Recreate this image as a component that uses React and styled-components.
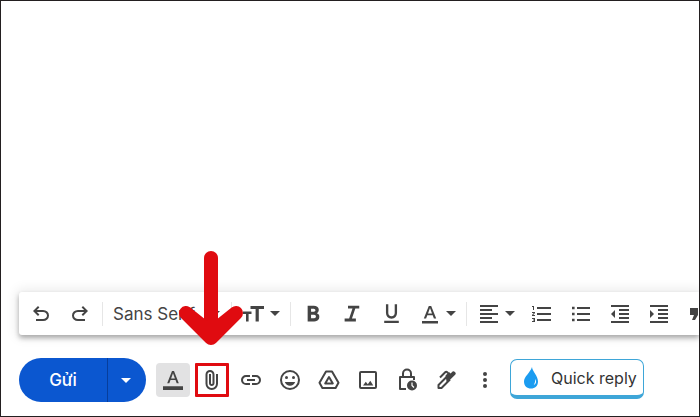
import styled, { createGlobalStyle, css } from 'styled-components'

const GlobalStyle = createGlobalStyle`
  * {
    box-sizing: border-box;
  }

  body {
    margin: 0;
    background: #fff;
    font-family: Inter, 'Liberation Sans', sans-serif;
    color: #444;
  }
`

const Compose = styled.main`
  display: flex;
  flex-direction: column;
  min-height: 100vh;
  padding: 0 0 14px 18px;
  border: 1px solid #231f20;
  overflow: hidden;
`

const Message = styled.textarea`
  flex: 1;
  width: 100%;
  padding: 16px;
  border: 0;
  outline: 0;
  resize: none;
  font: inherit;
`

const Bar = styled.div`
  display: flex;
  align-items: center;
`

const FormatBar = styled(Bar)`
  height: 43px;
  padding-left: 5px;
  gap: 5px;
  border-radius: 3px 0 0 3px;
  background: #fff;
  box-shadow: 0 3px 5px rgba(0, 0, 0, 0.3), 0 0 12px 3px rgba(0, 0, 0, 0.08);
`

const ActionBar = styled(Bar)`
  height: 44px;
  margin-top: 23px;
  gap: 5px;
`

const Divider = styled.span`
  flex: none;
  width: 1px;
  height: 24px;
  background: #e6e6e6;
`

const Button = styled.button`
  position: relative;
  flex: none;
  display: flex;
  align-items: center;
  justify-content: center;
  width: 34px;
  height: 34px;
  padding: 0;
  border: 0;
  border-radius: 4px;
  background: ${({ $active }) => ($active ? '#e2e2e3' : 'transparent')};
  color: #444;
  cursor: pointer;

  ${({ $marked }) =>
    $marked &&
    css`
      border: 3px solid #e00b10;
      border-radius: 1px;
    `}
`

const MenuButton = styled(Button)`
  width: 48px;
  gap: 4px;
`

const FontField = styled.label`
  position: relative;
  flex: none;
  display: flex;
  align-items: center;
  width: 118px;
  height: 34px;
  padding-left: 5px;
`

const FontSelect = styled.select`
  width: 100%;
  padding: 0;
  border: 0;
  outline: 0;
  appearance: none;
  background: transparent;
  color: #444;
  font: 400 17px/24px Inter, 'Liberation Sans', sans-serif;
`

const FontCaret = styled.span`
  position: absolute;
  right: 6px;
  display: flex;
  pointer-events: none;
`

const SendGroup = styled.div`
  flex: none;
  display: flex;
  height: 44px;
  margin-right: 5px;
  border-radius: 22px;
  overflow: hidden;
`

const SendButton = styled.button`
  display: flex;
  align-items: center;
  justify-content: center;
  width: ${({ $menu }) => ($menu ? 39 : 88)}px;
  padding: 0 ${({ $menu }) => ($menu ? 2 : 0)}px 0 0;
  border: 0;
  border-left: ${({ $menu }) => ($menu ? '1px solid #073e9c' : 0)};
  background: #0b57d0;
  color: #fff;
  font: 500 17px/24px Inter, 'Liberation Sans', sans-serif;
  cursor: pointer;
`

const QuickReply = styled.button`
  flex: none;
  display: flex;
  align-items: center;
  gap: 12px;
  height: 40px;
  margin: 0 0 2px 3px;
  padding: 0 6px 0 12px;
  border: 1px solid #3ea6d8;
  border-bottom-width: 4px;
  border-radius: 7px;
  background: #fff;
  color: #333;
  font: 400 16px/24px Inter, 'Liberation Sans', sans-serif;
  cursor: pointer;
`

const Arrow = styled.svg`
  position: absolute;
  left: 50%;
  bottom: 100%;
  width: 70px;
  height: 100px;
  margin: 0 0 20px -36px;
  pointer-events: none;
`

const Icon = ({ size = 24, symbol, children, d }) => (
  <svg
    width={size}
    height={size}
    viewBox={symbol ? '0 -960 960 960' : '0 0 24 24'}
    fill="currentColor"
    aria-hidden="true"
  >
    {d && <path d={d} />}
    {children}
  </svg>
)

const Stroked = ({ children, width = 2 }) => (
  <Icon>
    <g fill="none" stroke="currentColor" strokeWidth={width} strokeLinejoin="round">
      {children}
    </g>
  </Icon>
)

const Caret = () => (
  <svg width="10" height="5" viewBox="0 0 10 5" fill="currentColor" aria-hidden="true">
    <path d="M0 0h10L5 5z" />
  </svg>
)

const paths = {
  undo: 'M280-200v-80h284q63 0 109.5-40T720-420q0-60-46.5-100T564-560H312l104 104-56 56-200-200 200-200 56 56-104 104h252q97 0 166.500 63T800-420q0 94-69.500 157T564-200H280Z',
  redo: 'M396-200q-97 0-166.500-63T160-420q0-94 69.500-157T396-640h252L544-744l56-56 200 200-200 200-56-56 104-104H396q-63 0-109.500 40T240-420q0 60 46.500 100T396-280h284v80H396Z',
  bold: 'M272-200v-560h221q65 0 120 40t55 111q0 51-23 78.500T602-491q25 11 55.500 41t30.500 90q0 89-65 124.500T501-200H272Zm121-112h104q48 0 58.500-24.500T566-372q0-11-10.500-35.500T494-432H393v120Zm0-228h93q33 0 48-17t15-38q0-24-17-39t-44-15h-95v109Z',
  italic: 'M200-200v-100h160l120-360H320v-100h400v100H580L460-300h140v100H200Z',
  underline:
    'M200-120v-80h560v80H200Zm280-160q-101 0-157-63t-56-167v-330h90v336q0 56 32 95t91 39q59 0 91-39t32-95v-336h90v330q0 104-56 167t-157 63Z',
  align: 'M15 15H3v2h12v-2zm0-8H3v2h12V7zM3 13h18v-2H3v2zm0 8h18v-2H3v2zM3 3v2h18V3H3z',
  numbered:
    'M2 17h2v.5H3v1h1v.5H2v1h3v-4H2v1zm1-9h1V4H2v1h1v3zm-1 3h1.800L2 13.100v.9h3v-1H3.200L5 10.900V10H2v1zm5-6v2h14V5H7zm0 14h14v-2H7v2zm0-6h14v-2H7v2z',
  bulleted: 'M3 4.700h2.600v2.600H3zM3 10.700h2.600v2.600H3zM3 16.700h2.600v2.600H3zM8 5h13v2H8zM8 11h13v2H8zM8 17h13v2H8z',
  outdent:
    'M11 17h10v-2H11v2zm-8-5l4 4V8l-4 4zm0 9h18v-2H3v2zM3 3v2h18V3H3zm8 6h10V7H11v2zm0 4h10v-2H11v2z',
  indent:
    'M3 21h18v-2H3v2zM3 8v8l4-4-4-4zm8 9h10v-2H11v2zM3 3v2h18V3H3zm8 6h10V7H11v2zm0 4h10v-2H11v2z',
  quote: 'M6 18h3l3-5V6H4v7h4zm9 0h3l3-5V6h-8v7h4z',
  attach:
    'M720-330q0 104-73 177T470-80q-104 0-177-73t-73-177v-370q0-75 52.500-127.500T400-880q75 0 127.500 52.500T580-700v350q0 46-32 78t-78 32q-46 0-78-32t-32-78v-370h80v370q0 13 8.500 21.500T470-320q13 0 21.500-8.500T500-350v-350q-1-42-29.500-71T400-800q-42 0-71 29t-29 71v370q-1 71 49 120.500T470-160q70 0 119-49.500T640-330v-390h80v390Z',
  link: 'M440-280H280q-83 0-141.500-58.500T80-480q0-83 58.500-141.500T280-680h160v80H280q-50 0-85 35t-35 85q0 50 35 85t85 35h160v80ZM320-440v-80h320v80H320Zm200 160v-80h160q50 0 85-35t35-85q0-50-35-85t-85-35H520v-80h160q83 0 141.500 58.500T880-480q0 83-58.500 141.500T680-280H520Z',
}

const ColorIcon = () => (
  <Icon>
    <path d="M4 19h16v2.500H4zM10.800 4h2.400l5 12.500h-2.300l-1.200-3.200H9.300l-1.200 3.200H5.800zM10 11.400h4l-2-5.300z" />
  </Icon>
)

const FormatIcon = () => (
  <Icon>
    <path d="M2 18.200h20V22H2zM11 3h2l4.800 12.300h-2.100l-1.200-3.200h-5l-1.200 3.200H6.200zM10.100 10.400h3.800L12 5.200z" />
  </Icon>
)

const SizeIcon = () => (
  <Icon>
    <path d="M8.500 4H22v3h-5.200v12.500h-3.200V7H8.500zM1 9.500h8.500V12H6.600v7.500H4V12H1z" />
  </Icon>
)

const EmojiIcon = () => (
  <Stroked>
    <circle cx="12" cy="12" r="9" />
    <g fill="currentColor" stroke="none">
      <circle cx="8.500" cy="9.500" r="1.500" />
      <circle cx="15.500" cy="9.500" r="1.500" />
      <path d="M6.800 14h10.400c-.8 2.300-2.800 3.700-5.200 3.700S7.600 16.300 6.800 14z" />
    </g>
  </Stroked>
)

const DriveIcon = () => (
  <Stroked>
    <path d="M9 3.500h6l6.500 11.300-2.900 5.200H5.400l-2.900-5.200z" />
    <path d="M12 9l3.800 6.500H8.200z" />
  </Stroked>
)

const ImageIcon = () => (
  <Stroked>
    <rect x="4" y="4" width="16" height="16" rx="1" />
    <path d="M7 17.500l2.800-3.700 2 2.400 2.500-3.400 3 4.700z" fill="currentColor" stroke="none" />
  </Stroked>
)

const LockIcon = () => (
  <Stroked>
    <path d="M11 21H5V9h14v3M8 9V5.500a4 4 0 0 1 8 0V9" />
    <circle cx="17" cy="17.500" r="5" fill="currentColor" stroke="none" />
    <path d="M17 14.500v3l2 2" stroke="#fff" strokeWidth="1.200" />
  </Stroked>
)

const PenIcon = () => (
  <Stroked>
    <path d="M13 8.500L4.500 17v3h3L16 11.500" />
    <path d="M6 9.500l5.200-5.200q1-1 2 0l1 1" />
    <path
      d="M11.500 7.500l3.500-3.500 1.600 1.600 2-2q1-.8 2 .2l.8.8q.8 1 0 2L12.800 15z"
      fill="currentColor"
      stroke="none"
    />
  </Stroked>
)

const MoreIcon = () => (
  <Icon>
    <circle cx="12" cy="6" r="2" />
    <circle cx="12" cy="12" r="2" />
    <circle cx="12" cy="18" r="2" />
  </Icon>
)

const DropIcon = () => (
  <svg width="16" height="22" viewBox="0 0 16 22" aria-hidden="true">
    <path
      d="M9 0c.3 4.500 6 8.800 6 14.500C15 19 12 21.500 8 21.500S1 19 1 14.500C1 9.500 7 6 9 0z"
      fill="#1b9cf0"
    />
    <path d="M12.300 12c1.500 2.500.8 5-1.500 6 1-2 1.500-3.500 1.500-6z" fill="#fff" />
  </svg>
)

const tools = [
  { label: 'Danh sách đánh số', d: paths.numbered },
  { label: 'Danh sách dấu đầu dòng', d: paths.bulleted },
  { label: 'Giảm thụt lề', d: paths.outdent },
  { label: 'Tăng thụt lề', d: paths.indent },
  { label: 'Trích dẫn', d: paths.quote },
]

const actions = [
  { label: 'Chèn biểu tượng cảm xúc', Glyph: EmojiIcon },
  { label: 'Chèn từ Drive', Glyph: DriveIcon },
  { label: 'Chèn ảnh', Glyph: ImageIcon },
  { label: 'Chế độ bảo mật', Glyph: LockIcon },
  { label: 'Chèn chữ ký', Glyph: PenIcon },
  { label: 'Tùy chọn khác', Glyph: MoreIcon },
]

const Formatting = () => (
  <FormatBar role="toolbar" aria-label="Định dạng">
    <Button aria-label="Hoàn tác">
      <Icon symbol d={paths.undo} />
    </Button>
    <Button aria-label="Làm lại">
      <Icon symbol d={paths.redo} />
    </Button>
    <Divider />
    <FontField>
      <FontSelect aria-label="Phông chữ" defaultValue="sans">
        <option value="sans">Sans Serif</option>
      </FontSelect>
      <FontCaret>
        <Caret />
      </FontCaret>
    </FontField>
    <Divider />
    <MenuButton aria-label="Kích thước">
      <SizeIcon />
      <Caret />
    </MenuButton>
    <Divider />
    <Button aria-label="Đậm">
      <Icon size={27} symbol d={paths.bold} />
    </Button>
    <Button aria-label="Nghiêng">
      <Icon size={27} symbol d={paths.italic} />
    </Button>
    <Button aria-label="Gạch chân">
      <Icon size={25} symbol d={paths.underline} />
    </Button>
    <MenuButton aria-label="Màu chữ">
      <ColorIcon />
      <Caret />
    </MenuButton>
    <Divider />
    <MenuButton aria-label="Căn chỉnh">
      <Icon d={paths.align} />
      <Caret />
    </MenuButton>
    {tools.map(({ label, d }) => (
      <Button key={label} aria-label={label}>
        <Icon d={d} />
      </Button>
    ))}
  </FormatBar>
)

const App = () => (
  <>
    <GlobalStyle />
    <Compose>
      <Message aria-label="Nội dung thư" />
      <Formatting />
      <ActionBar>
        <SendGroup>
          <SendButton>Gửi</SendButton>
          <SendButton $menu aria-label="Tùy chọn gửi">
            <Caret />
          </SendButton>
        </SendGroup>
        <Button $active aria-label="Tùy chọn định dạng">
          <FormatIcon />
        </Button>
        <Button $marked aria-label="Đính kèm tệp">
          <Icon symbol d={paths.attach} />
          <Arrow viewBox="0 0 70 100" aria-hidden="true">
            <g fill="#e00b10" stroke="#e00b10" strokeLinecap="round" strokeLinejoin="round">
              <path d="M35 12v70" strokeWidth="14" />
              <path d="M10 67l25 25 25-25-25 20z" strokeWidth="14" />
            </g>
          </Arrow>
        </Button>
        <Button aria-label="Chèn đường liên kết">
          <Icon symbol d={paths.link} />
        </Button>
        {actions.map(({ label, Glyph }) => (
          <Button key={label} aria-label={label}>
            <Glyph />
          </Button>
        ))}
        <QuickReply>
          <DropIcon />
          Quick reply
        </QuickReply>
      </ActionBar>
    </Compose>
  </>
)

export default App
